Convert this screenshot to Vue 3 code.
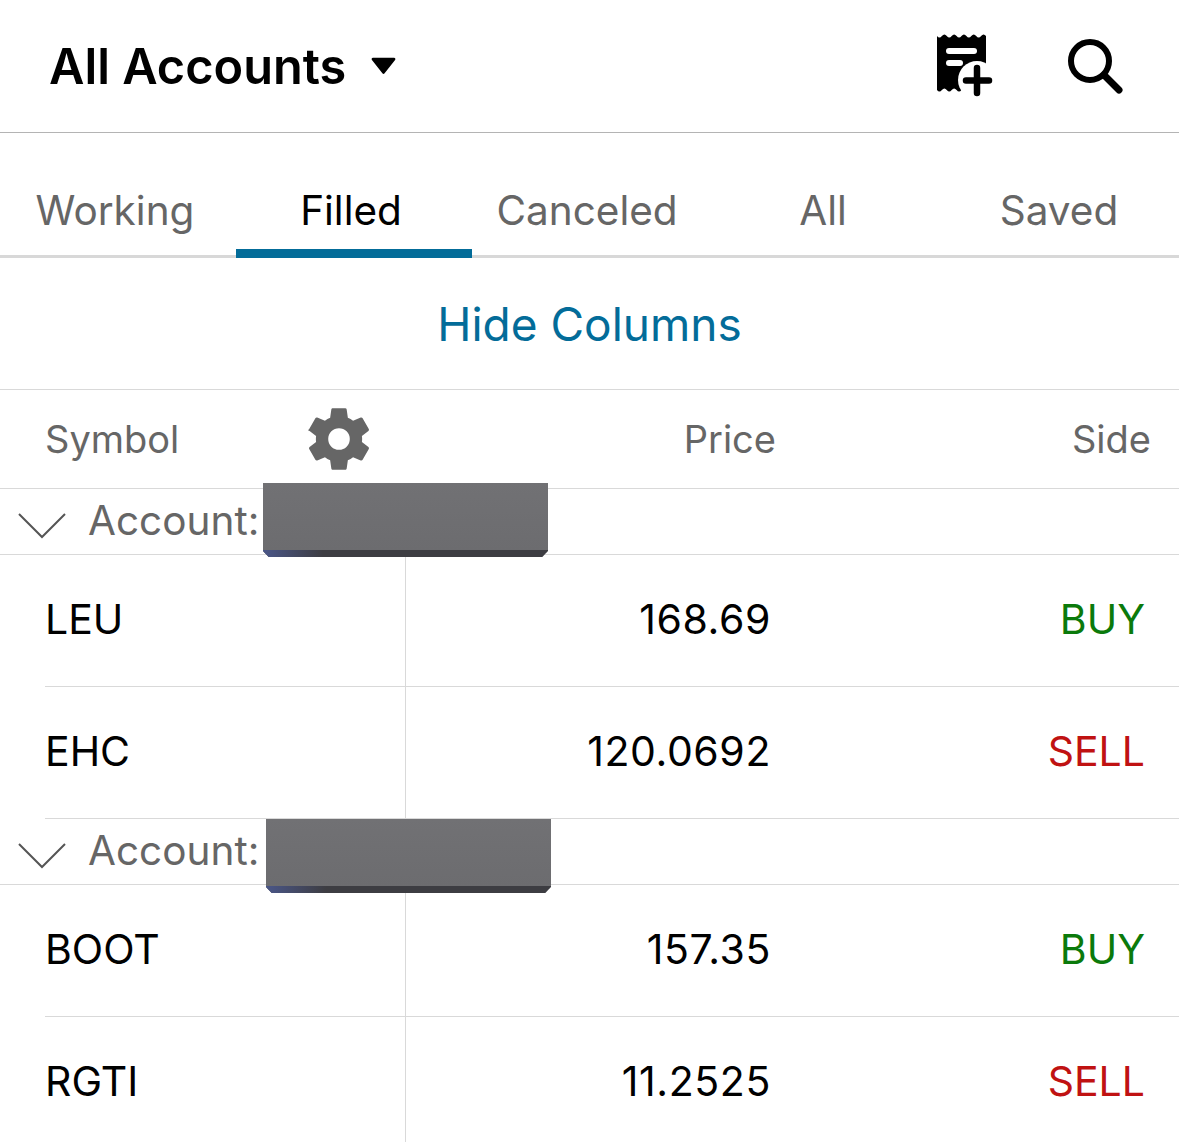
<script setup>
const tabs = [
  { label: 'Working' },
  { label: 'Filled', active: true },
  { label: 'Canceled' },
  { label: 'All' },
  { label: 'Saved' }
]
const groups = [
  {
    id: 1,
    maskClass: 'mask-a',
    orders: [
      { symbol: 'LEU', price: '168.69', side: 'BUY' },
      { symbol: 'EHC', price: '120.0692', side: 'SELL' }
    ]
  },
  {
    id: 2,
    maskClass: 'mask-b',
    orders: [
      { symbol: 'BOOT', price: '157.35', side: 'BUY' },
      { symbol: 'RGTI', price: '11.2525', side: 'SELL' }
    ]
  }
]
</script>

<template>
  <div class="page">
    <header class="top">
      <div class="title">
        <span>All Accounts</span>
        <svg class="caret" viewBox="0 0 24 18" width="27" height="20"><path d="M2.500 1.500h19a1.200 1.200 0 0 1 .9 2L13 15.600a1.300 1.300 0 0 1-2 0L1.600 3.500a1.200 1.200 0 0 1 .9-2z" fill="#000"/></svg>
      </div>
      <div class="actions">
        <svg class="receipt" viewBox="935 33 60 66" width="60" height="66">
          <path d="M937 36q2.450 3 4.900 0t4.900 0t4.900 0t4.900 0t4.900 0t4.900 0t4.900 0t4.900 0t4.900 0t4.900 0V90q-2.450-3-4.900 0t-4.900 0t-4.900 0t-4.900 0t-4.900 0t-4.900 0t-4.900 0t-4.900 0t-4.900 0t-4.900 0z" fill="#000"/>
          <rect x="946" y="48" width="31" height="6" rx="3" fill="#fff"/>
          <rect x="946" y="60" width="17" height="6" rx="3" fill="#fff"/>
          <circle cx="977" cy="80" r="19" fill="#fff"/>
          <path d="M977 68v25M966 80.500h23" stroke="#000" stroke-width="6.500" stroke-linecap="round" fill="none"/>
        </svg>
        <svg class="search" viewBox="0 0 56 56" width="56" height="56">
          <circle cx="23" cy="23" r="19" fill="none" stroke="#000" stroke-width="6"/>
          <path d="M37 37l15 15" stroke="#000" stroke-width="7" stroke-linecap="round"/>
        </svg>
      </div>
    </header>

    <nav class="tabs">
      <div v-for="t in tabs" :key="t.label" class="tab" :class="{ active: t.active }">{{ t.label }}</div>
    </nav>

    <div class="hide">Hide Columns</div>

    <div class="head">
      <div class="h-symbol">
        <span>Symbol</span>
        <svg class="gear" viewBox="0 0 24 24" width="74" height="74"><path fill="#666" fill-rule="evenodd" d="M19.430 12.980c.04-.32.07-.64.07-.98s-.03-.66-.07-.98l2.110-1.650c.19-.15.24-.42.120-.64l-2-3.460c-.12-.22-.39-.3-.61-.22l-2.490 1c-.52-.4-1.080-.73-1.690-.98l-.38-2.650A.488.488 0 0 0 14 2h-4c-.25 0-.46.18-.49.42l-.38 2.650c-.61.25-1.170.59-1.690.98l-2.490-1c-.23-.09-.49 0-.61.22l-2 3.460c-.13.22-.7.49.12.64l2.110 1.650c-.04.32-.07.65-.07.98s.03.66.07.98l-2.110 1.650c-.19.15-.24.42-.12.64l2 3.460c.12.22.39.3.61.22l2.490-1c.52.4 1.080.73 1.690.98l.38 2.650c.03.24.24.42.49.42h4c.25 0 .46-.18.49-.42l.38-2.650c.61-.25 1.170-.59 1.690-.98l2.490 1c.23.09.49 0 .61-.22l2-3.460c.12-.22.07-.49-.12-.64l-2.110-1.650zM12 15.500a3.500 3.500 0 1 1 0-7 3.500 3.500 0 0 1 0 7z"/></svg>
      </div>
      <div class="h-price">Price</div>
      <div class="h-side">Side</div>
    </div>

    <section v-for="g in groups" :key="g.id" class="group">
      <div class="account">
        <svg class="chev" viewBox="0 0 48 28" width="48" height="28"><path d="M1 2l23 23L47 2" fill="none" stroke="#555" stroke-width="2"/></svg>
        <span class="account-label">Account:</span>
        <div class="mask" :class="g.maskClass"></div>
      </div>
      <div v-for="o in g.orders" :key="o.symbol" class="row">
        <div class="symbol"><span>{{ o.symbol }}</span></div>
        <div class="price">{{ o.price }}</div>
        <div class="side" :class="o.side === 'BUY' ? 'buy' : 'sell'">{{ o.side }}</div>
      </div>
    </section>
  </div>
</template>

<style>
html, body { margin: 0; background: #fff; }
</style>

<style scoped>
.page {
  width: 1179px;
  height: 1142px;
  overflow: hidden;
  background: #fff;
  font-family: Inter, "Liberation Sans", sans-serif;
  color: #000;
}
.top {
  height: 132px;
  border-bottom: 1px solid #b4b4b4;
  display: flex;
  align-items: center;
  justify-content: space-between;
  padding: 0 56px 0 49px;
}
.title {
  display: flex;
  align-items: center;
  gap: 24px;
  font-size: 48.700px;
  font-weight: 600;
}
.actions { display: flex; align-items: center; gap: 72px; }
.tabs {
  height: 122px;
  display: grid;
  grid-template-columns: repeat(5, 236px);
  border-bottom: 3px solid #d8d8d8;
}
.tab {
  display: flex;
  align-items: center;
  justify-content: center;
  box-sizing: border-box;
  padding: 32px 6px 0 0;
  height: 122px;
  font-size: 40.500px;
  color: #666;
  position: relative;
}
.tab.active { color: #000; }
.tab.active::after {
  content: "";
  position: absolute;
  left: 0;
  right: 0;
  bottom: -3px;
  height: 9px;
  background: #036c99;
}
.hide {
  height: 131px;
  border-bottom: 1px solid #d9d9d9;
  display: flex;
  align-items: center;
  justify-content: center;
  font-size: 46px;
  color: #036c99;
}
.head {
  height: 98px;
  border-bottom: 1px solid #d9d9d9;
  display: grid;
  grid-template-columns: 405px 371px 1fr;
  align-items: center;
  font-size: 38px;
  color: #666;
}
.h-symbol { display: flex; align-items: center; padding-left: 45px; gap: 123px; }
.gear { flex: none; }
.h-price { text-align: right; }
.h-side { text-align: right; padding-right: 28px; }
.account {
  height: 65px;
  border-bottom: 1px solid #d9d9d9;
  display: flex;
  align-items: center;
  position: relative;
  padding-left: 18px;
  gap: 22px;
  font-size: 40.500px;
  color: #666;
}
.account-label { margin-top: -2px; }
.chev { margin-top: 8px; }
.mask {
  position: absolute;
  width: 285px;
  height: 74px;
  background: linear-gradient(180deg, #717174 0, #6c6c6f 91%, #3d3d42 91%);
  clip-path: polygon(0 0, 100% 0, 100% 92%, 98% 100%, 2% 100%, 0 92%);
  z-index: 1;
}
.mask::after {
  content: "";
  position: absolute;
  left: 0;
  bottom: 0;
  width: 60px;
  height: 7px;
  background: linear-gradient(90deg, #4a5688, rgba(61, 61, 66, 0));
}
.mask-a { left: 263px; top: -6px; }
.mask-b { left: 266px; top: 0; }
.row {
  height: 131px;
  margin-left: 45px;
  border-bottom: 1px solid #d9d9d9;
  display: grid;
  grid-template-columns: 361px 365px 1fr;
  align-items: center;
  font-size: 41px;
}
.group:last-child .row:last-child { border-bottom: 0; }
.symbol { height: 100%; display: flex; align-items: center; border-right: 1px solid #d9d9d9; box-sizing: border-box; }
.symbol span, .price, .side { position: relative; top: -2px; }
.price { text-align: right; letter-spacing: 0.6px; }
.side { text-align: right; padding-right: 34px; }
.buy { color: #0b7a0b; }
.sell { color: #c01212; }
</style>
